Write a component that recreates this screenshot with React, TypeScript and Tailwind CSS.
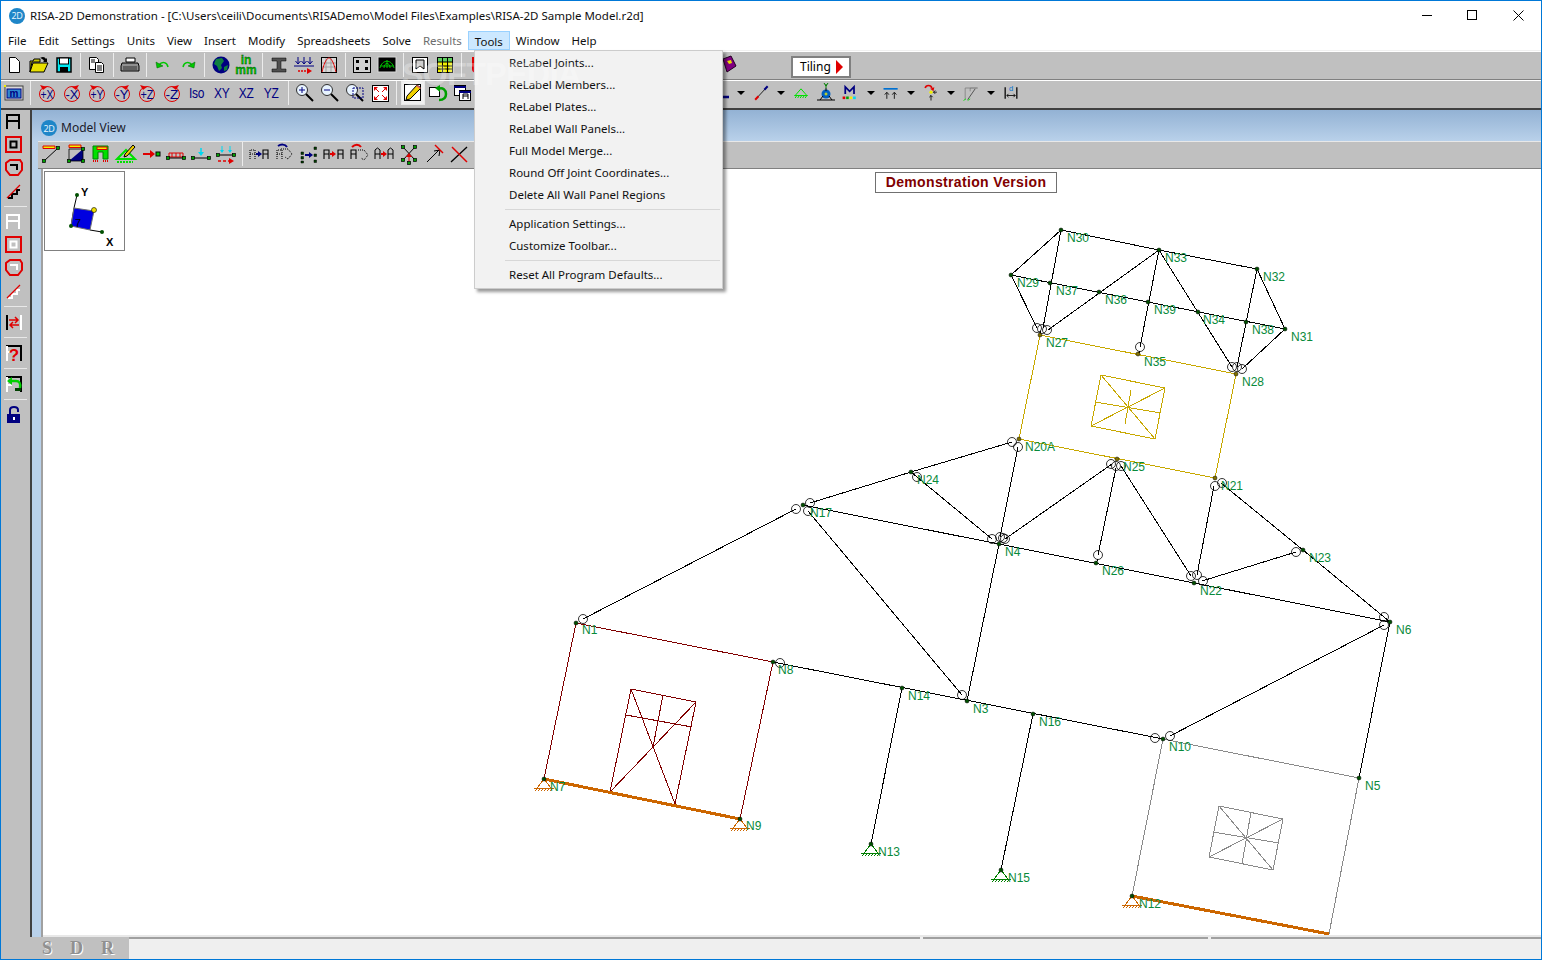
import React from "react";

const Ic = ({ children, w = 24, h = 24 }: { children: React.ReactNode; w?: number; h?: number }) => (
  <svg width={w} height={h} viewBox={`0 0 ${w} ${h}`} className="block">
    {children}
  </svg>
);

const Slot = ({ w = "w-[25px]", children }: { w?: string; children?: React.ReactNode }) => (
  <div className={`flex ${w} h-[24px] shrink-0 items-center justify-center`}>{children}</div>
);

const Sep = () => (
  <div className="flex w-[8px] shrink-0 justify-center">
    <div className="h-[24px] w-px bg-[#ececec]" />
  </div>
);

const Drop = () => (
  <Slot w="w-[20px]">
    <div className="h-0 w-0 border-x-[4px] border-t-[4px] border-x-transparent border-t-black" />
  </Slot>
);

const Logo = () => (
  <div className="flex h-[16px] w-[16px] items-center justify-center rounded-full bg-[#1e86c8] text-[9px] leading-none tracking-[-0.3px] text-[#e4f2fb]">
    2D
  </div>
);

// toolbar pictures
const Rot = ({ t }: { t: string }) => {
  const plus = t.startsWith("+");
  return (
    <Ic>
      <circle cx="12" cy="13" r="7.500" fill="none" stroke="#e00000" strokeWidth="1" />
      <path d={plus ? "M5 4l7 2-4 3z" : "M19 4l-7 2 4 3z"} fill="#e00000" />
      <text x="12" y="17.500" textAnchor="middle" fontSize="13" fill="#000080" fontFamily="Liberation Sans" textLength="13" lengthAdjust="spacingAndGlyphs">
        {t}
      </text>
    </Ic>
  );
};

const AxisText = ({ t }: { t: string }) => (
  <span className="font-['Liberation_Sans'] text-[15px] leading-none tracking-[-0.3px] text-[#000080] [transform:scaleX(0.8)]">{t}</span>
);

const Lens = ({ sign }: { sign: string }) => (
  <Ic>
    <circle cx="9" cy="9" r="5.500" fill="#e8f4ff" stroke="#303030" />
    <path d="M13 13l7 7" stroke="#000" strokeWidth="2" />
    {sign === "+" && <path d="M6 9h6M9 6v6" stroke="#000080" />}
    {sign === "-" && <path d="M6 9h6" stroke="#000080" />}
    {sign === "r" && <rect x="10" y="7" width="10" height="10" fill="none" stroke="#000080" strokeDasharray="2 1" />}
  </Ic>
);

const NewFile = () => (
  <Ic><path d="M7.500 4.500h6l4 4v11h-10z" fill="#fff" stroke="#000" /></Ic>
);
const OpenFile = () => (
  <Ic>
    <path d="M3 19V8h3l1-2h6v3h-8l-2 10z" fill="#c8c800" stroke="#000" />
    <path d="M3 19l3-9h15l-4 9z" fill="#e8e000" stroke="#000" />
    <path d="M13 5c3-2 5-1 6 1l1-1v4h-4l1-1c-1-2-2-2-4-3z" fill="#000" />
  </Ic>
);
const Save = () => (
  <Ic>
    <rect x="5" y="5" width="14" height="14" fill="#00e8f0" stroke="#000" strokeWidth="1.500" />
    <rect x="7.500" y="5" width="9" height="6" fill="#fff" stroke="#000" />
    <rect x="8" y="14" width="8" height="5" fill="#000" />
  </Ic>
);
const Copy = () => (
  <Ic>
    <path d="M4.500 4.500h7l2 2v10h-9z" fill="#fff" stroke="#000" />
    <path d="M10.500 9.500h6l2 2v8h-8z" fill="#fff" stroke="#000" />
    <path d="M12 13h5M12 15h5M12 17h5M6 7h4M6 9h4" stroke="#000" />
  </Ic>
);
const Printer = () => (
  <Ic>
    <path d="M8 5h9v4H8z" fill="#fff" stroke="#000" />
    <path d="M4 10h16l1 3v5H3v-5z" fill="#909090" stroke="#000" />
    <path d="M5 14h14M5 16h14" stroke="#303030" />
  </Ic>
);
const Curl = ({ flip }: { flip?: boolean }) => (
  <Ic>
    <g transform={flip ? "translate(24 0) scale(-1 1)" : undefined}>
      <path d="M8 12c3-4 8-3 9 2" fill="none" stroke="#00c800" strokeWidth="1.500" />
      <path d="M5 9l1 6 6-2z" fill="#00c800" stroke="#006000" strokeWidth=".5" />
    </g>
  </Ic>
);
const Globe = () => (
  <Ic>
    <circle cx="12" cy="12" r="8.500" fill="#000080" />
    <path d="M7 6l6-1 2 3-3 4 1 3-3 3-2-5-3-2zM15 14l4-2-1 5-3 1z" fill="#108040" />
  </Ic>
);
const InMm = () => (
  <Ic>
    <text x="12" y="11" textAnchor="middle" fontSize="12" fontWeight="700" fill="#00c000" stroke="#004000" strokeWidth=".3" fontFamily="Liberation Sans">in</text>
    <text x="12" y="21" textAnchor="middle" fontSize="12" fontWeight="700" fill="#00c000" stroke="#004000" strokeWidth=".3" fontFamily="Liberation Sans">mm</text>
  </Ic>
);
const IBeam = () => (
  <Ic><path d="M5 5h14v3h-5v8h5v3H5v-3h5V8H5z" fill="#505050" stroke="#000" strokeWidth=".5" /></Ic>
);
const Loads = () => (
  <Ic>
    <path d="M6 4v7M12 4v7M18 4v7M3.500 8L6 11l2.500-3M9.500 8l2.500 3 2.500-3M15.500 8l2.500 3 2.500-3" fill="none" stroke="#000080" />
    <path d="M2 13h20" stroke="#000080" />
    <path d="M6 18h10" stroke="#e00000" strokeWidth="1.500" strokeDasharray="2 1" />
    <path d="M15 15l5 3-5 3z" fill="#e00000" />
  </Ic>
);
const Chart = () => (
  <Ic>
    <rect x="4.500" y="4.500" width="15" height="15" fill="#d8d8d8" stroke="#000" />
    <path d="M5 10h14M5 14h14M9 5v14M14 5v14" stroke="#a0a0a0" />
    <path d="M5 19C8 6 11 5 12 5s4 1 7 14" fill="none" stroke="#e00000" />
  </Ic>
);
const Dots = () => (
  <Ic>
    <rect x="3.500" y="4.500" width="17" height="15" fill="#d0d0d0" stroke="#000" />
    <path d="M6 7h3v3H6zM15 7h3v3h-3zM6 14h3v3H6zM15 14h3v3h-3z" />
  </Ic>
);
const Dome = () => (
  <Ic>
    <rect x="3" y="4" width="18" height="15" fill="#000" stroke="#d8d8d8" />
    <path d="M5 15c2-9 12-9 14 0M9 15c0-6 6-6 6 0M12 7v8M5 13h14" fill="none" stroke="#00c000" />
  </Ic>
);
const Bookmark = () => (
  <Ic>
    <rect x="4.500" y="4.500" width="15" height="15" fill="#fff" stroke="#000" />
    <path d="M8 7h8v9l-4-3-4 3z" fill="#d0d0d0" stroke="#000" />
  </Ic>
);
const Sheet = () => (
  <Ic>
    <rect x="4.500" y="4.500" width="15" height="15" fill="#f0f000" stroke="#000" />
    <path d="M5 5h14v4H5z" fill="#60d060" />
    <path d="M4 9h16M4 13h16M4 16h16M9.500 4v16M14.500 4v16" stroke="#000" />
  </Ic>
);
const Book = () => (
  <Ic>
    <path d="M7 6l8-3 5 10-9 6z" fill="#800080" stroke="#200020" />
    <path d="M11 8l4-1 1 3-3 1z" fill="#e8e000" />
  </Ic>
);
const MBox = () => (
  <Ic>
    <rect x="3" y="5" width="18" height="14" fill="#d8d8d8" stroke="#404040" />
    <rect x="5" y="8" width="14" height="9" fill="#3088d0" stroke="#000080" />
    <text x="12" y="15.500" textAnchor="middle" fontSize="10" fill="#000080" fontWeight="700" fontFamily="Liberation Sans">m</text>
    <rect x="2" y="4" width="2" height="2" fill="#f0f000" />
  </Ic>
);
const Fit = () => (
  <Ic>
    <rect x="4.500" y="4.500" width="16" height="16" fill="#fff" stroke="#000" />
    <path d="M7 7l4 4M18 7l-4 4M7 18l4-4M18 18l-4-4" stroke="#e00000" />
    <path d="M6 6h4l-4 4zM19 6h-4l4 4zM6 19h4l-4-4zM19 19h-4l4-4z" fill="#e00000" />
  </Ic>
);
const Pencil = () => (
  <div className="flex h-[24px] w-[24px] items-center justify-center border border-[#e8e8e8] bg-[#f0f0f0]">
    <Ic w={20} h={20}>
      <rect x="1.500" y="1.500" width="16" height="16" fill="#fff" stroke="#000" />
      <path d="M3 17l1-4L14 2l4 3L7 16z" fill="#f0d000" stroke="#000" />
      <path d="M14 2l4 3-1 1-4-3z" fill="#e06060" />
    </Ic>
  </div>
);
const BackArrow = () => (
  <Ic>
    <rect x="3.500" y="6.500" width="10" height="9" fill="#fff" stroke="#000" />
    <path d="M12 8c5-2 8 1 8 5s-3 6-7 6" fill="none" stroke="#00a000" strokeWidth="2.500" />
    <path d="M9 7l5-3v7z" fill="#00a000" />
  </Ic>
);
const Windows = () => (
  <Ic>
    <rect x="3.500" y="4.500" width="11" height="10" fill="#fff" stroke="#000" />
    <rect x="8.500" y="9.500" width="11" height="10" fill="#fff" stroke="#000" />
    <path d="M3 6h12M8 11h12" stroke="#000080" strokeWidth="2" />
    <path d="M12 18v-5h5v5M12 15h5" fill="none" stroke="#000" />
  </Ic>
);
const ElL = () => <Ic w={16}><path d="M6 6v10h8" fill="none" stroke="#000080" strokeWidth="2.500" /><rect x="4" y="14" width="4" height="4" fill="#000080" /></Ic>;
const BlueLine = () => <Ic><path d="M6 19L19 5" stroke="#000" /><path d="M5 20l4-4" stroke="#e00000" strokeWidth="2.500" /><path d="M16 8l4-4" stroke="#000080" strokeWidth="2.500" /></Ic>;
const Support = () => (
  <Ic><path d="M12 7l-7 8h14zM4 15h16M5 18l2-3M8 18l2-3M11 18l2-3M14 18l2-3M17 18l2-3" fill="none" stroke="#00e000" strokeWidth="1.200" /></Ic>
);
const Spring = () => (
  <Ic>
    <path d="M12 3l0 4M10 2l2 3 2-3" fill="none" stroke="#008000" />
    <circle cx="12" cy="13" r="4.500" fill="#0060c0" />
    <path d="M12 7v3M3 19h18M6 19l3-4M18 19l-3-4" fill="none" stroke="#000" />
    <path d="M10.500 13h3M12 11.500v3" stroke="#f0f000" />
  </Ic>
);
const MLoad = () => (
  <Ic>
    <path d="M6 13V5l5 5 5-5v8" fill="none" stroke="#000080" strokeWidth="2" />
    <path d="M3 16h3v3H3z" fill="#e00000" /><path d="M7 16h3v3H7z" fill="#00a000" /><path d="M11 16h3v3h-3z" fill="#f0f000" /><path d="M15 16h3v3h-3z" fill="#00d8f0" />
  </Ic>
);
const Dist = () => (
  <Ic><path d="M3 7h17" stroke="#0070d0" strokeWidth="2" /><path d="M7 19v-7M4.500 14L7 11l2.500 3M16 19v-7M13.500 14l2.500-3 2.500 3" fill="none" stroke="#000" /></Ic>
);
const Pt = () => (
  <Ic>
    <path d="M5 6c1-4 7-4 8 0" fill="none" stroke="#e00000" strokeWidth="2" /><path d="M11 7l5-2-1 5z" fill="#e00000" />
    <circle cx="12" cy="11" r="2" fill="#f0f000" />
    <path d="M19 11h-4M17 9l-2 2 2 2M12 21v-6M10 17l2-2 2 2" fill="none" stroke="#000" />
  </Ic>
);
const Gray = () => (
  <Ic><path d="M5 20V6h6v4" fill="none" stroke="#808080" /><path d="M11 6h9" stroke="#606060" /><path d="M8 20l9-13" stroke="#404040" /><path d="M3 21l3-2M8 21l3-2" stroke="#00e000" /></Ic>
);
const Dim = () => (
  <Ic><path d="M5 5v14M19 5v14" stroke="#000" strokeWidth="1.500" /><path d="M7 15h10M9 13l-2 2 2 2M15 13l2 2-2 2" fill="none" stroke="#000" /><text x="12" y="10" textAnchor="middle" fontSize="9" fill="#0070d0" fontFamily="Liberation Sans">d</text></Ic>
);

// model view toolbar
const Node = ({ x, y }: { x: number; y: number }) => <rect x={x - 1.500} y={y - 1.500} width="3" height="3" fill="#00a000" stroke="#000" strokeWidth=".7" />;
const Wt1 = () => <Ic><path d="M5 19L19 6" stroke="#000" /><path d="M4 4h12v2.500H4z" fill="#f0f000" stroke="#e00000" /><Node x={5} y={19} /><Node x={19} y={6} /></Ic>;
const Wt2 = () => <Ic><path d="M5 19L19 7v12z" fill="#000080" /><path d="M5 7L5 19M5 19h14V7H5" fill="none" stroke="#000" strokeWidth=".8" /><path d="M5 3h12v2.500H5z" fill="#f0f000" stroke="#e00000" /><Node x={5} y={19} /><Node x={19} y={19} /><Node x={19} y={7} /></Ic>;
const Wt3 = () => <Ic><path d="M4 4h15v13h-5v-7H9v7H4z" fill="#00e000" stroke="#008000" /><path d="M8 5h10v2.500H8z" fill="#f0f000" stroke="#e00000" /><path d="M4 19h5M14 19h5" stroke="#e00000" strokeWidth="2" strokeDasharray="1 1" /></Ic>;
const Wt4 = () => <Ic><path d="M3 17L12 8l9 9z" fill="none" stroke="#00e000" strokeWidth="2" /><path d="M3 20h16" stroke="#00e000" strokeWidth="2" strokeDasharray="2 1" /><path d="M10 15l1-3 8-9 2 2-8 9z" fill="#f0d000" stroke="#000" /></Ic>;
const Wt5 = () => <Ic><path d="M4 12h9" stroke="#e00000" strokeWidth="2" /><path d="M11 8l5 4-5 4z" fill="#e00000" /><rect x="17" y="10" width="4" height="4" fill="#00c000" stroke="#000" /></Ic>;
const Wt6 = () => <Ic><path d="M5 11h14v4H5z" fill="none" stroke="#e00000" /><path d="M8 11v4M12 11v4M16 11v4" stroke="#e00000" /><path d="M3 16h18" stroke="#000" /><Node x={4} y={16} /><Node x={20} y={16} /></Ic>;
const Wt7 = () => <Ic><path d="M12 6v7" stroke="#00d8f0" strokeWidth="1.500" /><path d="M9 10l3 4 3-4z" fill="#00d8f0" /><path d="M3 16h18" stroke="#000" /><Node x={4} y={16} /><Node x={20} y={16} /></Ic>;
const Wt8 = () => <Ic><path d="M8 4v6M16 4v6" stroke="#00d8f0" /><path d="M6 8l2 3 2-3zM14 8l2 3 2-3z" fill="#00d8f0" /><path d="M3 13h18" stroke="#000" /><Node x={4} y={13} /><Node x={20} y={13} /><path d="M4 19h12" stroke="#e00000" strokeWidth="1.500" strokeDasharray="3 2" /><path d="M15 16l5 3-5 3z" fill="#e00000" /></Ic>;
const Aglyph = ({ x, dot }: { x: number; dot?: boolean }) => (
  <path d={`M${x} 17V8h5v9M${x} 12h5`} fill="none" stroke="#000" strokeDasharray={dot ? "1 1" : undefined} strokeWidth="1.100" />
);
const Wt9 = () => <Ic><Aglyph x={3} dot /><path d="M9 12h3" stroke="#000080" strokeWidth="2" /><path d="M11 9l4 3-4 3z" fill="#000080" /><Aglyph x={16} /></Ic>;
const Wt10 = () => <Ic><Aglyph x={5} dot /><path d="M9 7l7 0 4 5-4 5-3-2" fill="none" stroke="#000" strokeDasharray="1 1" /><path d="M6 4c3-2 7-2 9 1" fill="none" stroke="#000080" strokeWidth="2" /></Ic>;
const Wt11 = () => <Ic><path d="M4 10h2.500v2.500H4zM4 14.500h2.500V17H4zM4 19h2.500v2H4zM17 5h2.500v2.500H17zM17 12h2.500v2.500H17zM17 18h2.500v2.500H17z" fill="#004000" stroke="#000" strokeWidth=".5" /><path d="M8 13h5" stroke="#000080" strokeWidth="2" /><path d="M12 10l4 3-4 3z" fill="#000080" /></Ic>;
const Wt12 = () => <Ic><Aglyph x={2} /><path d="M8 12h3" stroke="#e00000" strokeWidth="2" /><path d="M10 9l4 3-4 3z" fill="#e00000" /><Aglyph x={16} /></Ic>;
const Wt13 = () => <Ic><Aglyph x={4} /><path d="M11 8l6 0 4 5-4 5-3-2" fill="none" stroke="#000" strokeDasharray="1 1" /><path d="M5 5c3-3 7-3 9 0" fill="none" stroke="#e00000" strokeWidth="2" /></Ic>;
const Wt14 = () => <Ic><path d="M3 17V8l2.500-2L8 8v9M3 12h5M16 17V8l2.500-2L21 8v9M16 12h5" fill="none" stroke="#000" /><path d="M9 12h3" stroke="#e00000" strokeWidth="2" /><path d="M11 9l4 3-4 3z" fill="#e00000" /></Ic>;
const Wt15 = () => <Ic><path d="M6 5l12 13M18 5L6 18" stroke="#000" /><path d="M12 20v-7" stroke="#e00000" /><path d="M9 15l3-4 3 4z" fill="#e00000" /><Node x={6} y={5} /><Node x={18} y={5} /><Node x={6} y={18} /><Node x={18} y={18} /><Node x={12} y={21} /></Ic>;
const Wt16 = () => <Ic><path d="M5 20L17 8M12 9l6-1-1 6" fill="none" stroke="#000" /><path d="M13 3l8 8" stroke="#e00000" strokeWidth="1.500" /></Ic>;
const Wt17 = () => <Ic><path d="M4 20L20 5" stroke="#000" strokeWidth="1.300" /><path d="M5 5l15 15" stroke="#e00000" strokeWidth="1.500" /></Ic>;

// left toolbar
const Frame = ({ c = "#000" }: { c?: string }) => <Ic><path d="M6 19V5h12v14M6 11h12" fill="none" stroke={c} strokeWidth="2" /></Ic>;
const Plate = ({ c = "#000" }: { c?: string }) => <Ic><rect x="5" y="4" width="15" height="15" fill="none" stroke="#e00000" strokeWidth="2" /><rect x="9.500" y="8.500" width="6" height="6" fill="none" stroke={c} strokeWidth="2" /></Ic>;
const Octa = ({ c = "#000" }: { c?: string }) => <Ic><path d="M9 4h10l2 3v7l-4 5H9l-4-5V7z" fill="none" stroke="#e00000" strokeWidth="2" /><path d="M9 9h7v5" fill="none" stroke={c} strokeWidth="2" /></Ic>;
const Diag = ({ c = "#000" }: { c?: string }) => <Ic><path d="M7 19h4v-4h5v-4h3" fill="none" stroke={c} strokeWidth="2" /><path d="M6 19L19 6" stroke="#e00000" strokeWidth="1.300" /></Ic>;
const Swap = () => <Ic><path d="M6 5v15" stroke="#000" strokeWidth="2" /><path d="M20 5v15" stroke="#fff" strokeWidth="2" /><path d="M8 10h9M14 7l3 3-3 3M18 15H9M12 12l-3 3 3 3" fill="none" stroke="#e00000" strokeWidth="1.500" /></Ic>;
const Q = () => <Ic><path d="M6 20V5h14v15" fill="none" stroke="#000" strokeWidth="2" /><path d="M6 5v15M6 11h5" stroke="#fff" strokeWidth="2" /><text x="13" y="20" textAnchor="middle" fontSize="17" fontWeight="700" fill="#e00000" fontFamily="Liberation Sans">?</text></Ic>;
const Grn = () => <Ic><path d="M6 20V5h14v15" fill="none" stroke="#000" strokeWidth="2" /><path d="M6 5v15M6 13h5" stroke="#fff" strokeWidth="2" /><path d="M9 9h6c3 0 5 2 4 7" fill="none" stroke="#00d000" strokeWidth="2.500" /><path d="M11 5v8l-5-4z" fill="#00d000" /><rect x="14" y="16" width="6" height="3" fill="#004000" /></Ic>;
const Lock = () => <Ic><path d="M9 11V7c0-4 8-4 8 0v2" fill="none" stroke="#000080" strokeWidth="2" /><rect x="6" y="11" width="13" height="9" fill="#000080" /><rect x="12" y="14" width="2" height="3" fill="#fff" /></Ic>;

const LeftSep = () => (
  <div className="flex h-[8px] shrink-0 items-center px-[3px]">
    <div className="h-px w-full bg-[#e8e8e8]" />
  </div>
);
const LeftIcon = ({ children }: { children: React.ReactNode }) => (
  <div className="flex h-[23px] shrink-0 items-center justify-start">{children}</div>
);

const menuItems = ["File", "Edit", "Settings", "Units", "View", "Insert", "Modify", "Spreadsheets", "Solve"];

// model geometry, in screen coordinates
const P: Record<string, [number, number]> = {
  N30: [1061, 230], N33: [1159, 250], N32: [1257, 269], N29: [1011, 275], N37: [1050, 283], N36: [1099, 292], N39: [1148, 302],
  N34: [1198, 312], N38: [1246, 322], N31: [1285, 329], N27: [1040, 335], N35: [1138, 354], N28: [1236, 374], N20A: [1019, 439],
  N25: [1117, 459], N21: [1215, 478], N17: [803, 505], N24: [911, 472], N4: [999, 544], N26: [1096, 563], N22: [1194, 583],
  N23: [1303, 550], N6: [1390, 622], N1: [576, 623], N8: [773, 662], N14: [902, 688], N3: [967, 701], N16: [1033, 714],
  N10: [1163, 739], N5: [1359, 778], N7: [544, 779], N9: [740, 819], N13: [871, 844], N15: [1001, 870], N12: [1132, 896],
};

const labels: [string, number, number][] = [
  ["N30", 1067, 242], ["N33", 1165, 262], ["N32", 1263, 281], ["N29", 1017, 287], ["N37", 1056, 295], ["N36", 1105, 304], ["N39", 1154, 314],
  ["N34", 1203, 324], ["N38", 1252, 334], ["N31", 1291, 341], ["N27", 1046, 347], ["N35", 1144, 366], ["N28", 1242, 386], ["N20A", 1025, 451],
  ["N25", 1123, 471], ["N21", 1221, 490], ["N24", 917, 484], ["N17", 810, 517], ["N4", 1005, 556], ["N26", 1102, 575], ["N22", 1200, 595],
  ["N23", 1309, 562], ["N6", 1396, 634], ["N1", 582, 634], ["N8", 778, 674], ["N14", 908, 700], ["N3", 973, 713], ["N16", 1039, 726],
  ["N10", 1169, 751], ["N5", 1365, 790], ["N7", 550, 791], ["N9", 746, 830], ["N13", 878, 856], ["N15", 1008, 882], ["N12", 1139, 908],
];

const black: number[][] = [
  [1061, 230, 1159, 250], [1159, 250, 1257, 269], [1011, 275, 1061, 230], [1061, 230, 1043, 328], [1011, 275, 1037, 328],
  [1011, 275, 1285, 329], [1159, 250, 1048, 330], [1159, 250, 1140, 347], [1140, 351, 1138, 354], [1159, 250, 1232, 367], [1257, 269, 1237, 367],
  [1257, 269, 1285, 329], [1285, 329, 1242, 369], [1040, 335, 1041, 331], [583, 619, 796, 509], [810, 503, 911, 472], [911, 472, 1012, 442],
  [917, 477, 992, 539], [911, 472, 917, 477], [1018, 447, 1000, 537], [1112, 464, 1005, 539], [1116, 468, 1098, 555], [1096, 563, 1098, 559],
  [1121, 466, 1191, 576], [1214, 486, 1197, 575], [1221, 483, 1303, 550], [1296, 552, 1202, 581], [803, 505, 1390, 622], [1303, 550, 1390, 622],
  [808, 511, 962, 695], [999, 544, 967, 701], [773, 662, 1163, 739], [1170, 736, 1384, 625], [1390, 622, 1359, 778], [902, 688, 871, 844], [1033, 714, 1001, 870],
];

const red: number[][] = [
  [576, 623, 773, 662], [773, 662, 740, 819], [544, 779, 576, 623], [631, 689, 696, 702], [696, 702, 675, 804], [631, 689, 610, 792],
  [626, 715, 692, 727], [663, 695, 653, 747], [631, 689, 675, 804], [696, 702, 610, 792],
];
const gray: number[][] = [
  [1163, 739, 1359, 778], [1359, 778, 1329, 934], [1163, 739, 1132, 896], [1219, 806, 1283, 819], [1283, 819, 1273, 870], [1273, 870, 1209, 857], [1209, 857, 1219, 806],
  [1219, 806, 1273, 870], [1283, 819, 1209, 857], [1213, 832, 1279, 843], [1251, 812, 1242, 864],
];
const yellow: number[][] = [
  [1040, 335, 1236, 374], [1236, 374, 1215, 478], [1215, 478, 1019, 439], [1019, 439, 1040, 335], [1101, 375, 1165, 388], [1165, 388, 1155, 439], [1155, 439, 1091, 426],
  [1091, 426, 1101, 375], [1101, 375, 1155, 439], [1165, 388, 1091, 426], [1095, 402, 1161, 413], [1131, 390, 1125, 424],
];

const circles: number[][] = [
  [1037, 328], [1042, 329], [1047, 330], [1140, 347], [1232, 367], [1237, 367], [1242, 369], [1012, 442], [1018, 447], [1111, 464], [1116, 466], [1121, 466],
  [1215, 486], [1222, 483], [583, 619], [796, 509], [810, 503], [808, 511], [917, 477], [992, 539], [1000, 537], [1005, 539], [1003, 538], [1098, 555],
  [1191, 576], [1197, 575], [1203, 581], [1296, 552], [1384, 617], [1384, 625], [780, 663], [962, 695], [1155, 738], [1170, 736],
];

const Lines = ({ data, color, w = 1 }: { data: number[][]; color: string; w?: number }) => (
  <g stroke={color} strokeWidth={w}>
    {data.map((l, i) => (
      <line key={i} x1={l[0]} y1={l[1]} x2={l[2]} y2={l[3]} />
    ))}
  </g>
);

const Fixed = ({ x, y, c }: { x: number; y: number; c: string }) => (
  <path
    d={`M${x} ${y}l-7 9M${x} ${y}l7 9M${x - 10} ${y + 9}h20M${x - 9} ${y + 12}l3-3M${x - 6} ${y + 12}l3-3M${x - 3} ${y + 12}l3-3M${x} ${y + 12}l3-3M${x + 3} ${y + 12}l3-3M${x + 6} ${y + 12}l3-3`}
    fill="none"
    stroke={c}
    strokeWidth="1"
    shapeRendering="crispEdges"
  />
);

const Canvas = () => (
  <svg viewBox="43 169 1498 766" width="1498" height="766" className="block">
    <g shapeRendering="crispEdges">
      <Lines data={black} color="#000" />
      <Lines data={red} color="#800000" />
      <Lines data={gray} color="#8a8a8a" />
      <Lines data={yellow} color="#c8a800" />
      <Lines data={[[544, 779, 740, 819], [1132, 896, 1329, 934]]} color="#cc6600" w={3} />
    </g>
    <g fill="none" stroke="#000" strokeWidth="0.800">
      {circles.map((c, i) => (
        <circle key={i} cx={c[0]} cy={c[1]} r="4.500" />
      ))}
    </g>
    <Fixed x={544} y={779} c="#cc6600" />
    <Fixed x={740} y={819} c="#cc6600" />
    <Fixed x={1132} y={896} c="#cc6600" />
    <Fixed x={871} y={844} c="#008000" />
    <Fixed x={1001} y={870} c="#008000" />
    {Object.entries(P).map(([k, [x, y]]) => (
      <circle key={k} cx={x} cy={y} r="2" fill={["N27", "N28", "N35", "N20A", "N25", "N21"].includes(k) ? "#807000" : "#005000"} stroke="#000" strokeWidth="0.500" />
    ))}
    <g fontFamily="Liberation Sans" fontSize="12" fill="#088a3a">
      {labels.map(([t, x, y]) => (
        <text key={t} x={x} y={y}>{t}</text>
      ))}
    </g>
  </svg>
);

const NavCube = () => (
  <div className="absolute left-[1px] top-[2px] h-[80px] w-[81px] border border-[#808080] bg-white">
    <svg viewBox="44 171 79 78" width="79" height="78" className="block">
      <path d="M76 194l-3 13M70 225l3-18M89 229l12 2" stroke="#000" fill="none" />
      <path d="M73 207l20 3-4 19-19-4z" fill="#0000e0" stroke="#707070" />
      <circle cx="76" cy="194" r="2" fill="#005000" />
      <circle cx="70" cy="225" r="2" fill="#005000" />
      <circle cx="101" cy="231" r="2" fill="#005000" />
      <circle cx="93" cy="209" r="2.500" fill="#f0e000" stroke="#000" strokeWidth=".6" />
      <g fontFamily="Liberation Sans" fontWeight="700" fontSize="11">
        <text x="80" y="195">Y</text>
        <text x="105" y="245">X</text>
        <text x="74" y="226" fontWeight="400">7</text>
      </g>
    </svg>
  </div>
);

const popup: (string | null)[] = [
  "ReLabel Joints...",
  "ReLabel Members...",
  "ReLabel Plates...",
  "ReLabel Wall Panels...",
  "Full Model Merge...",
  "Round Off Joint Coordinates...",
  "Delete All Wall Panel Regions",
  null,
  "Application Settings...",
  "Customize Toolbar...",
  null,
  "Reset All Program Defaults...",
];

export default function App() {
  return (
    <div className="relative flex h-[960px] w-[1542px] flex-col overflow-hidden border border-[#0078d7] bg-white font-['Noto_Sans',sans-serif] text-[11.5px] text-[#101010]">
      {/* Title bar */}
      <div className="flex h-[29px] shrink-0 items-center">
        <div className="ml-[8px]"><Logo /></div>
        <span className="ml-[5px]">RISA-2D Demonstration - [C:\Users\ceili\Documents\RISADemo\Model Files\Examples\RISA-2D Sample Model.r2d]</span>
        <div className="ml-auto flex items-center">
          <svg width="11" height="11" className="mr-[34px]"><path d="M0 5.500h10" stroke="#000" /></svg>
          <svg width="11" height="11" className="mr-[35px]"><rect x=".5" y=".5" width="9" height="9" fill="none" stroke="#000" /></svg>
          <svg width="11" height="11" className="mr-[17px]"><path d="M.5.500l10 10M10.500.500l-10 10" stroke="#000" /></svg>
        </div>
      </div>

      {/* Menu bar */}
      <div className="flex h-[21px] shrink-0 items-center border-b border-[#f0f0f0] pl-[1px] pt-[2px]">
        {menuItems.map((m) => (
          <span key={m} className="px-[6px]">{m}</span>
        ))}
        <span className="px-[6px] text-[#6d6d6d]">Results</span>
        <span className="-mt-[2px] h-[19px] border border-[#99d1ff] bg-[#cce8ff] px-[6px] leading-[19px]">Tools</span>
        <span className="px-[6px]">Window</span>
        <span className="px-[6px]">Help</span>
      </div>

      {/* Main toolbar */}
      <div className="flex h-[29px] shrink-0 items-center border-y border-t-white border-b-[#808080] bg-[#c0c0c0] pb-[2px]">
        <Slot><NewFile /></Slot><Slot><OpenFile /></Slot><Slot><Save /></Slot><Sep />
        <Slot><Copy /></Slot><Sep />
        <Slot><Printer /></Slot><Sep />
        <Slot><Curl /></Slot><Slot><Curl flip /></Slot><Sep />
        <Slot><Globe /></Slot><Slot><InMm /></Slot><Sep />
        <Slot><IBeam /></Slot><Slot><Loads /></Slot><Slot><Chart /></Slot><Sep />
        <Slot><Dots /></Slot><Slot><Dome /></Slot><Sep />
        <Slot><Bookmark /></Slot><Slot><Sheet /></Slot><Sep />
        <Slot><Ic><path d="M7 4v12c0 3 4 4 8 3" fill="none" stroke="#e00000" strokeWidth="2" /></Ic></Slot>
        <div className="w-[225px] shrink-0" />
        <Slot><Book /></Slot>
        <div className="ml-[51px] mt-[4px] flex h-[22px] w-[60px] items-center border-2 border-[#808080] bg-white pl-[7px] text-[12px] text-[#000]">
          <span>Tiling</span>
          <div className="ml-[5px] h-0 w-0 border-y-[7px] border-l-[7px] border-y-transparent border-l-[#e00000]" />
        </div>
      </div>

      {/* View toolbar */}
      <div className="flex h-[30px] shrink-0 items-center border-t border-b-2 border-t-white border-b-[#404040] bg-[#c0c0c0] pb-[4px]">
        <Slot><MBox /></Slot><Sep />
        <Slot><Rot t="+X" /></Slot><Slot><Rot t="-X" /></Slot><Slot><Rot t="+Y" /></Slot><Slot><Rot t="-Y" /></Slot><Slot><Rot t="+Z" /></Slot><Slot><Rot t="-Z" /></Slot>
        <Slot><AxisText t="Iso" /></Slot><Slot><AxisText t="XY" /></Slot><Slot><AxisText t="XZ" /></Slot><Slot><AxisText t="YZ" /></Slot><Sep />
        <Slot><Lens sign="+" /></Slot><Slot><Lens sign="-" /></Slot><Slot><Lens sign="r" /></Slot><Slot><Fit /></Slot><Sep />
        <Slot><Pencil /></Slot><Slot><BackArrow /></Slot><Slot><Windows /></Slot>
        <div className="w-[240px] shrink-0" />
        <Slot w="w-[16px]"><ElL /></Slot><Drop />
        <Slot w="w-[20px]"><BlueLine /></Slot><Drop />
        <Slot w="w-[20px]"><Support /></Slot>
        <Slot w="w-[29px]"><Spring /></Slot>
        <Slot w="w-[21px]"><MLoad /></Slot><Drop />
        <Slot w="w-[20px]"><Dist /></Slot><Drop />
        <Slot w="w-[20px]"><Pt /></Slot><Drop />
        <Slot w="w-[20px]"><Gray /></Slot><Drop />
        <Slot w="w-[20px]"><Dim /></Slot>
      </div>

      {/* Workspace */}
      <div className="flex min-h-0 flex-1">
        <div className="flex w-[29px] shrink-0 flex-col bg-[#c0c0c0]">
          <LeftIcon><Frame /></LeftIcon><LeftIcon><Plate /></LeftIcon><LeftIcon><Octa /></LeftIcon><LeftIcon><Diag /></LeftIcon>
          <LeftSep />
          <LeftIcon><Frame c="#fff" /></LeftIcon><LeftIcon><Plate c="#fff" /></LeftIcon><LeftIcon><Octa c="#fff" /></LeftIcon><LeftIcon><Diag c="#fff" /></LeftIcon>
          <LeftSep />
          <LeftIcon><Swap /></LeftIcon>
          <LeftSep />
          <LeftIcon><Q /></LeftIcon>
          <LeftSep />
          <LeftIcon><Grn /></LeftIcon>
          <LeftSep />
          <LeftIcon><Lock /></LeftIcon>
        </div>

        {/* Model View window */}
        <div className="flex min-w-0 flex-1 flex-col border-l-2 border-[#404040] bg-[#b9d1ea]">
          <div className="flex h-[31px] shrink-0 items-center bg-gradient-to-b from-[#93b2d4] to-[#b9d1ea] pl-[9px] pt-[5px]">
            <Logo />
            <span className="ml-[4px] text-[12px] text-[#1a1a2a]">Model View</span>
          </div>
          <div className="ml-[6px] flex h-[28px] shrink-0 items-center border-y border-t-[#e8e8e8] border-b-[#808080] bg-[#c0c0c0] pb-[3px]">
            <Slot><Wt1 /></Slot><Slot><Wt2 /></Slot><Slot><Wt3 /></Slot><Slot><Wt4 /></Slot><Slot><Wt5 /></Slot><Slot><Wt6 /></Slot><Slot><Wt7 /></Slot><Slot><Wt8 /></Slot><Sep />
            <Slot><Wt9 /></Slot><Slot><Wt10 /></Slot><Slot><Wt11 /></Slot><Slot><Wt12 /></Slot><Slot><Wt13 /></Slot><Slot><Wt14 /></Slot><Slot><Wt15 /></Slot><Slot><Wt16 /></Slot><Slot><Wt17 /></Slot>
          </div>
          <div className="ml-[9px] flex min-h-0 flex-1 flex-col border-l-2 border-[#a0a0a0]">
            <div className="relative h-[766px] shrink-0 overflow-hidden bg-white">
              <Canvas />
              <NavCube />
              <div className="absolute left-[832px] top-[3px] flex h-[21px] w-[182px] items-center justify-center border border-[#707070] bg-white font-['Liberation_Sans'] text-[14px] font-bold tracking-[0.35px] text-[#800000]">
                Demonstration Version
              </div>
            </div>
            <div className="flex-1 bg-[#e8e8e8]" />
          </div>
        </div>
      </div>

      {/* Status bar */}
      <div className="flex h-[22px] shrink-0 bg-[#efefef]">
        <div className="flex w-[128px] shrink-0 items-center justify-end gap-[18px] bg-[#c0c0c0] pr-[15px] font-['Liberation_Serif'] text-[18px] font-bold leading-none text-[#909090] [text-shadow:1px_1px_0_#fff]">
          <span>S</span><span>D</span><span>R</span>
        </div>
        <div className="w-[791px] border-t-2 border-[#a0a0a0]" />
        <div className="ml-[3px] w-[285px] border-t-2 border-[#a0a0a0]" />
        <div className="ml-[3px] flex-1 border-t-2 border-[#a0a0a0]" />
      </div>

      {/* Tools dropdown */}
      <div className="absolute left-[473px] top-[49px] z-20 w-[249px] border border-[#cccccc] bg-[#f2f2f2] pb-[2px] pt-[1px] shadow-[3px_3px_3px_rgba(0,0,0,0.4)]">
        {popup.map((item, i) =>
          item ? (
            <div key={i} className="flex h-[22px] items-center pl-[34px]">{item}</div>
          ) : (
            <div key={i} className="flex h-[7px] items-center pl-[30px] pr-[2px]">
              <div className="h-px w-full bg-[#d7d7d7]" />
            </div>
          )
        )}
      </div>

      {/* Watermark */}
      <div className="pointer-events-none absolute left-[401px] top-[57px] z-30 font-['Liberation_Sans'] text-[32px] font-bold leading-none tracking-[-0.5px] text-white/30">
        SOFTPEDIA
      </div>
    </div>
  );
}
